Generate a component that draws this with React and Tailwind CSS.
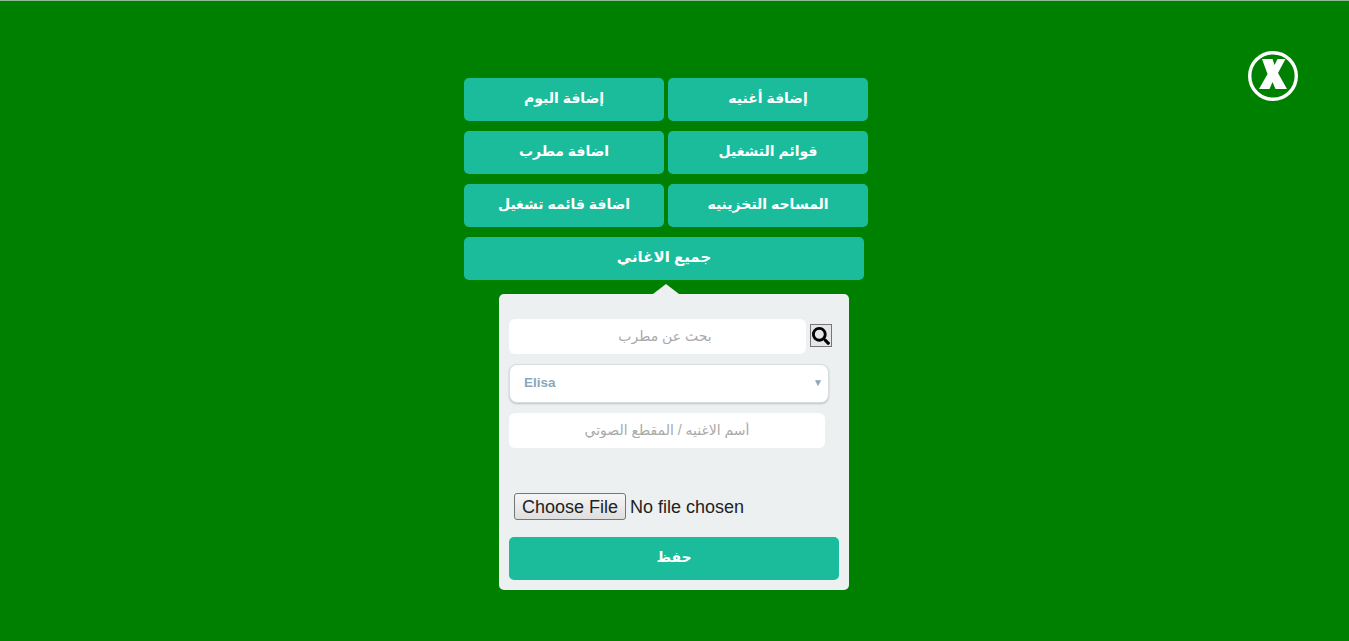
import React from "react";
import { FaSearch } from "react-icons/fa";

const menu = [
  ["إضافة البوم", "إضافة أغنيه"],
  ["اضافة مطرب", "قوائم التشغيل"],
  ["اضافة قائمه تشغيل", "المساحه التخزينيه"],
];

const MenuButton = ({ children, className = "" }) => (
  <button className={`h-[43px] rounded-[5px] bg-[#1abc9c] pb-[2px] text-[14px] font-bold text-white ${className}`}>
    {children}
  </button>
);

const CloseIcon = () => (
  <svg viewBox="0 0 50 50" className="absolute left-[1248px] top-[50px] h-[50px] w-[50px]">
    <circle cx="25" cy="25" r="23.300" fill="none" stroke="white" strokeWidth="3.400" />
    <path d="M14 8H24.500L26.500 14 29.500 8H37.500L30 22 39 38H27.500L24.500 31 21.500 38H11L19.500 23Z" fill="white" />
  </svg>
);

export default function App() {
  return (
    <div className="relative min-h-[641px] border-t border-t-[#8fb98f] bg-[#008000] pt-[77px] font-['Liberation_Sans','DejaVu_Sans',sans-serif]">
      <CloseIcon />

      <div className="ml-[464px] flex w-[404px] flex-col gap-[10px]">
        {menu.map((row, i) => (
          <div key={i} className="flex gap-1">
            {row.map((label) => (
              <MenuButton key={label} className="w-[200px]">{label}</MenuButton>
            ))}
          </div>
        ))}
        <MenuButton className="w-[400px] text-[15px]">جميع الاغاني</MenuButton>
      </div>

      <div className="relative ml-[499px] mt-[14px] h-[296px] w-[350px] rounded-[5px] bg-[#ecf0f1] pl-[10px] pt-[25px]">
        <div className="absolute left-[154px] top-[-10px] h-0 w-0 border-x-[13px] border-b-[10px] border-x-transparent border-b-[#ecf0f1]" />

        <div className="flex items-start gap-1">
          <input
            dir="rtl"
            placeholder="بحث عن مطرب"
            className="h-[35px] w-[297px] rounded-md bg-white pb-[2px] pl-[15px] text-center text-[14px] outline-none placeholder:text-[#a9a9a9]"
          />
          <button className="mt-[5px] flex h-[23px] w-[22px] items-center justify-center border border-[#767676] bg-[#e4e6e7] text-black">
            <FaSearch className="h-[18px] w-[18px]" />
          </button>
        </div>

        <div className="relative mt-[10px] flex h-[39px] w-[320px] items-center rounded-lg border border-[#d8dde0] bg-white pl-[14px] text-[13.5px] font-bold text-[#8aa8bd] shadow-[0_1px_2px_rgba(0,0,0,0.2)]">
          Elisa
          <span className="absolute right-[5px] top-[12px] text-[10px] leading-[12px] text-[#8aa8bd]">▼</span>
        </div>

        <input
          dir="rtl"
          placeholder="أسم الاغنيه / المقطع الصوتي"
          className="mt-[10px] block h-[35px] w-[316px] rounded-md bg-white pb-[2px] text-center text-[14px] outline-none placeholder:text-[#a9a9a9]"
        />

        <input
          type="file"
          className="ml-[5px] mt-[45px] block h-[27px] w-[320px] text-[18px] text-[#222] file:h-[27px] file:rounded-[3px] file:border file:border-[#767676] file:bg-linear-to-b file:from-[#f6f6f6] file:to-[#dedede] file:px-[7px] file:pb-[2px] file:text-[18px] file:text-[#222]"
        />

        <button className="mt-[17px] h-[43px] w-[330px] rounded-[5px] bg-[#1abc9c] pb-[2px] text-[14px] font-bold text-white">
          حفظ
        </button>
      </div>
    </div>
  );
}
